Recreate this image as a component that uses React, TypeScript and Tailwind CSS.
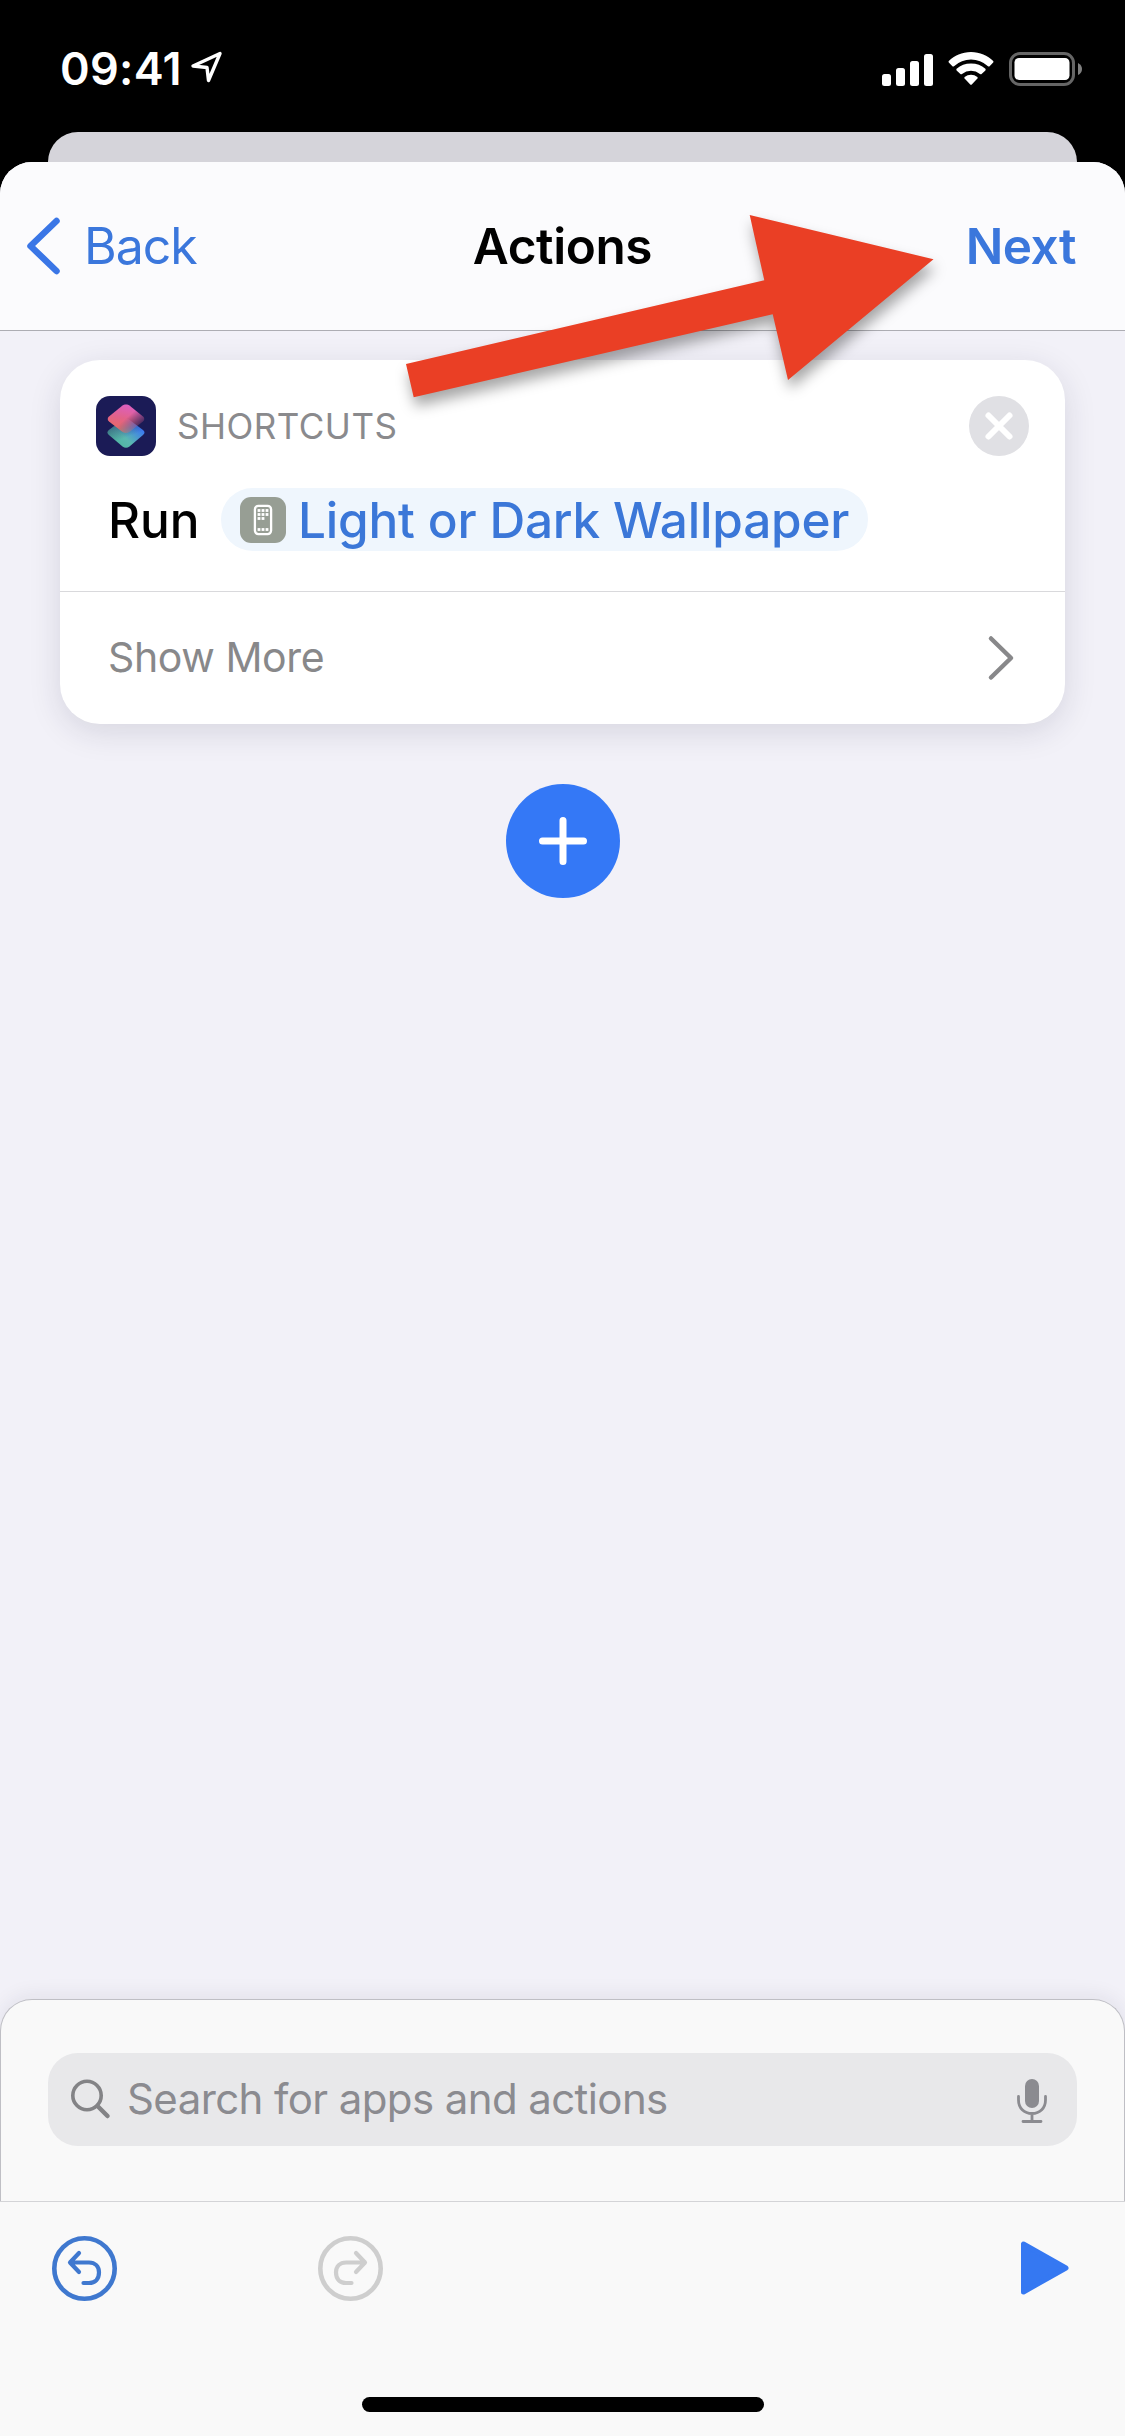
const StatusBar = () => (
  <div className="flex h-[132px] items-start justify-between pt-[40px] pr-[42px] pl-[60px] text-white">
    <div className="flex items-center">
      <span className="w-[122px] text-[45px] leading-[57px] font-semibold tracking-[0.300px] whitespace-nowrap">
        09:41
      </span>
      <svg className="mb-1 ml-[8px]" width="34" height="34" viewBox="0 0 34 34">
        <path
          d="M3 16 L30 3.5 L18.5 30.5 L17 17.5 Z"
          fill="none"
          stroke="white"
          strokeWidth="3.4"
          strokeLinejoin="round"
        />
      </svg>
    </div>
    <div className="flex items-center pt-[11px]">
      <svg width="52" height="34" viewBox="0 0 52 34" fill="white">
        <rect x="0" y="22" width="9" height="12" rx="2.5" />
        <rect x="14" y="16" width="9" height="18" rx="2.5" />
        <rect x="28" y="9" width="9" height="25" rx="2.5" />
        <rect x="42" y="2" width="9" height="32" rx="2.5" />
      </svg>
      <svg
        className="ml-[14px]"
        width="46"
        height="34"
        viewBox="0 0 46 34"
        fill="white"
      >
        <path d="M23 0 C14 0 6.500 3.500 .8 9 Q.2 9.800 .8 10.600 L4.400 14.200 Q5.200 14.800 6 14.200 Q13.500 7.500 23 7.500 Q32.500 7.500 40 14.200 Q40.800 14.800 41.600 14.200 L45.200 10.600 Q45.800 9.800 45.200 9 C39.500 3.500 32 0 23 0 Z" />
        <path d="M23 11.500 Q14.500 11.500 8.600 16.800 Q8 17.600 8.600 18.400 L12.400 22 Q13.200 22.600 14 22 Q18 18.800 23 18.800 Q28 18.800 32 22 Q32.800 22.600 33.600 22 L37.400 18.400 Q38 17.600 37.400 16.800 Q31.500 11.500 23 11.500 Z" />
        <path d="M23 22.800 Q19.500 22.800 16.600 25 Q16 25.800 16.600 26.600 L22.200 32.400 Q23 33.200 23.800 32.400 L29.400 26.600 Q30 25.800 29.400 25 Q26.500 22.800 23 22.800 Z" />
      </svg>
      <svg className="ml-[15px]" width="74" height="36" viewBox="0 0 74 36">
        <rect
          x="1.500"
          y="2.500"
          width="63"
          height="31"
          rx="9.500"
          fill="none"
          stroke="#666"
          strokeWidth="3"
        />
        <rect x="5.500" y="7" width="55" height="22" rx="4.500" fill="white" />
        <path d="M69 12 Q73 14 73 18 Q73 22 69 24 Z" fill="#808080" />
      </svg>
    </div>
  </div>
);

const NavBar = () => (
  <header className="grid h-[169px] grid-cols-[1fr_auto_1fr] items-center rounded-t-[32px] border-b border-[#adadb3] bg-[#fbfbfd] px-[26px]">
    <div className="flex items-center text-[#3b77dc]">
      <svg width="36" height="60" viewBox="0 0 36 60">
        <path
          d="M30.500 5 L4.500 30 L30.500 55"
          fill="none"
          stroke="#3a76e6"
          strokeWidth="6.500"
          strokeLinecap="round"
          strokeLinejoin="round"
        />
      </svg>
      <span className="ml-[22px] text-[50px] leading-[60px] tracking-[-1px]">
        Back
      </span>
    </div>
    <h1 className="text-[49.500px] leading-[60px] font-semibold tracking-[-0.400px] text-black">
      Actions
    </h1>
    <span className="pr-[23px] text-right text-[49.500px] leading-[60px] font-semibold tracking-[-0.500px] text-[#3b77dc]">
      Next
    </span>
  </header>
);

const ShortcutsLogo = () => (
  <svg width="60" height="60" viewBox="0 0 60 60">
    <defs>
      <linearGradient id="logo-top" x1="0.650" y1="0" x2="0.350" y2="1">
        <stop offset="0" stopColor="#dc5fc6" />
        <stop offset="0.500" stopColor="#e2628a" />
        <stop offset="1" stopColor="#ec6b5c" />
      </linearGradient>
      <linearGradient id="logo-fade" x1="0.400" y1="0.300" x2="0.900" y2="0.750">
        <stop offset="0.300" stopColor="white" />
        <stop offset="1" stopColor="white" stopOpacity="0.150" />
      </linearGradient>
      <mask id="logo-mask" maskContentUnits="objectBoundingBox">
        <rect width="1" height="1" fill="url(#logo-fade)" />
      </mask>
      <linearGradient id="logo-bottom" x1="0.200" y1="0.900" x2="0.900" y2="0.300">
        <stop offset="0" stopColor="#4fb5a0" />
        <stop offset="0.400" stopColor="#5ab8b0" />
        <stop offset="1" stopColor="#3a76f2" />
      </linearGradient>
      <linearGradient id="logo-shade" x1="0.250" y1="0.150" x2="0.500" y2="0.650">
        <stop offset="0" stopColor="#1b1b56" stopOpacity="0.500" />
        <stop offset="1" stopColor="#1b1b56" stopOpacity="0" />
      </linearGradient>
    </defs>
    <rect width="60" height="60" rx="14" fill="#1b1b56" />
    <path
      d="M26.500 24 Q30 22 33.500 24 L47 34 Q50 36.500 47 39 L33.500 50.500 Q30 53 26.500 50.500 L13 39 Q10 36.500 13 34 Z"
      fill="url(#logo-bottom)"
    />
    <path
      d="M26.500 24 Q30 22 33.500 24 L47 34 Q50 36.500 47 39 L33.500 50.500 Q30 53 26.500 50.500 L13 39 Q10 36.500 13 34 Z"
      fill="url(#logo-shade)"
    />
    <path
      d="M26.500 9.500 Q30 7 33.500 9.500 L47 20.500 Q50 23 47 25.500 L33.500 36 Q30 38 26.500 36 L13 25.500 Q10 23 13 20.500 Z"
      fill="url(#logo-top)"
      mask="url(#logo-mask)"
    />
  </svg>
);

const keys = [
  [19, 13.5],
  [23, 13.5],
  [27, 13.5],
  [19, 17.5],
  [23, 17.5],
  [27, 17.5],
  [19, 21.5],
  [23, 21.5],
  [19, 32.5],
  [23, 32.5],
  [27, 32.5],
];

const PhoneIcon = () => (
  <svg width="46" height="46" viewBox="0 0 46 46">
    <rect width="46" height="46" rx="11" fill="#979e94" />
    <rect
      x="14.900"
      y="8.900"
      width="16.200"
      height="28.200"
      rx="3.500"
      fill="none"
      stroke="white"
      strokeWidth="2.300"
    />
    {keys.map(([x, y]) => (
      <rect
        key={`${x}-${y}`}
        x={x - 1.4}
        y={y - 1.4}
        width="2.800"
        height="2.800"
        fill="white"
      />
    ))}
  </svg>
);

const ActionCard = () => (
  <div className="h-[364px] rounded-[40px] bg-white shadow-[0_8px_32px_rgba(30,30,60,0.130)]">
    <div className="h-[232px] border-b border-[#d9d9dc] pt-[36px]">
      <div className="flex items-center pr-[36px] pl-[36px]">
        <ShortcutsLogo />
        <span className="ml-[21px] flex-1 text-[35px] leading-[44px] tracking-[0.500px] text-[#8a8a8d]">
          SHORTCUTS
        </span>
        <svg width="60" height="60" viewBox="0 0 60 60">
          <circle cx="30" cy="30" r="30" fill="#e0e0e4" />
          <path
            d="M19.500 19.500 L40.500 40.500 M40.500 19.500 L19.500 40.500"
            stroke="white"
            strokeWidth="6"
            strokeLinecap="round"
          />
        </svg>
      </div>
      <div className="mt-[32px] flex h-[63px] items-center pl-[48px] text-[49.500px] leading-[60px] font-medium whitespace-nowrap">
        <span className="w-[113px] text-black">Run</span>
        <span className="flex h-[63px] w-[647px] items-center rounded-full bg-[#eff6fd] pl-[19px] text-[#3b77d8]">
          <PhoneIcon />
          <span className="ml-[12px] tracking-[-0.200px]">
            Light or Dark Wallpaper
          </span>
        </span>
      </div>
    </div>
    <div className="flex h-[132px] items-center justify-between pr-[50px] pl-[48px]">
      <span className="pb-0.5 text-[41px] leading-[50px] tracking-[-0.400px] text-[#88888a]">
        Show More
      </span>
      <svg width="28" height="48" viewBox="0 0 28 48">
        <path
          d="M4 4.500 L24 24 L4 43.500"
          fill="none"
          stroke="#88888a"
          strokeWidth="4.500"
          strokeLinecap="round"
          strokeLinejoin="round"
        />
      </svg>
    </div>
  </div>
);

const SearchPanel = () => (
  <div className="h-[202px] rounded-t-[32px] border-x border-t border-[#bfbfc5] bg-[#f9f9f9] px-[47px] pt-[53px] shadow-[0_-4px_20px_rgba(30,30,60,0.070)]">
    <div className="flex h-[93px] items-center rounded-[30px] bg-[#e8e8ea] pr-[30px] pl-[22px]">
      <svg width="42" height="42" viewBox="0 0 42 42">
        <circle
          cx="17"
          cy="16.500"
          r="14.200"
          fill="none"
          stroke="#838386"
          strokeWidth="3.600"
        />
        <path
          d="M27.500 27 L37.500 37"
          stroke="#838386"
          strokeWidth="4.500"
          strokeLinecap="round"
        />
      </svg>
      <span className="ml-[15px] flex-1 pb-0.5 text-[42px] leading-[52px] tracking-[-0.600px] text-[#8b8b90]">
        Search for apps and actions
      </span>
      <svg className="mt-1" width="30" height="45" viewBox="0 0 30 45">
        <rect x="8" y="0" width="14" height="29" rx="7" fill="#8b8b90" />
        <path
          d="M1.500 17.500 V21 C1.500 29 7 34.500 15 34.500 C23 34.500 28.500 29 28.500 21 V17.500 M15 34.500 V42.500 M6 42.500 H24"
          fill="none"
          stroke="#8b8b90"
          strokeWidth="2.800"
          strokeLinecap="round"
        />
      </svg>
    </div>
  </div>
);

const HistoryIcon = ({ className }: { className: string }) => (
  <svg
    className={className}
    width="65"
    height="65"
    viewBox="0 0 65 65"
    fill="none"
    stroke="currentColor"
    strokeLinecap="round"
    strokeLinejoin="round"
  >
    <circle cx="32.500" cy="32.500" r="30.200" strokeWidth="4.600" />
    <path
      d="M27 17 L18 26.500 L27 36 M18.500 26.500 H37 C43 26.500 47 30.500 47 36.500 C47 43 43 47 37 47 H31.500"
      strokeWidth="4.200"
    />
  </svg>
);

const Toolbar = () => (
  <div className="flex h-[235px] flex-col justify-between border-t border-[#d4d4d7] bg-[#f9f9f9] pb-[24px]">
    <div className="flex items-center pt-[34px] pr-[55px] pl-[52px]">
      <HistoryIcon className="text-[#3f78cf]" />
      <HistoryIcon className="ml-[201px] -scale-x-100 text-[#cecece]" />
      <svg className="mb-0.5 ml-auto" width="50" height="56" viewBox="0 0 50 56">
        <path
          d="M3.500 4 V52 L46 28 Z"
          fill="#3578f2"
          stroke="#3578f2"
          strokeWidth="5"
          strokeLinejoin="round"
        />
      </svg>
    </div>
    <div className="mx-auto h-[15px] w-[402px] rounded-full bg-black" />
  </div>
);

// Red pointer laid over the nav bar and the card
const Arrow = () => (
  <svg
    className="absolute top-[200px] left-[390px] overflow-visible drop-shadow-[2px_9px_7px_rgba(0,0,0,0.350)]"
    width="560"
    height="210"
    viewBox="390 200 560 210"
  >
    <path
      d="M406 364 L764.300 280.300 L749.700 215 L933.500 259.300 L788 380 L772.700 314.300 L413.700 397.300 Z"
      fill="#ea3f25"
    />
  </svg>
);

export default function App() {
  return (
    <main className="relative flex h-[2436px] w-[1125px] flex-col overflow-hidden bg-black font-['Inter',sans-serif]">
      <StatusBar />
      <div className="mx-[48px] h-[30px] rounded-t-[30px] bg-[#d5d4da]" />
      <div className="flex flex-1 flex-col rounded-t-[32px] bg-[#f2f1f8]">
        <NavBar />
        <div className="flex flex-1 flex-col px-[60px] pt-[29px]">
          <ActionCard />
          <button className="mx-auto mt-[60px] flex size-[114px] items-center justify-center rounded-full bg-[#3478f6]">
            <svg width="50" height="50" viewBox="0 0 50 50">
              <path
                d="M25 4.500 V45.500 M4.500 25 H45.500"
                stroke="white"
                strokeWidth="7"
                strokeLinecap="round"
              />
            </svg>
          </button>
        </div>
        <SearchPanel />
        <Toolbar />
      </div>
      <Arrow />
    </main>
  );
}
